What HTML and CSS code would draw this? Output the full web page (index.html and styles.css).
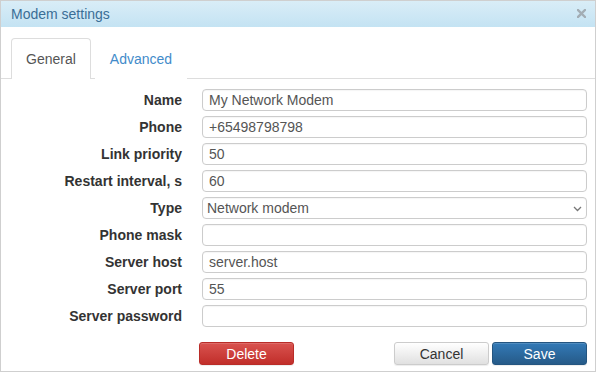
FILE: index.html
```html
<!DOCTYPE html>
<html>
<head>
<meta charset="utf-8">
<link rel="stylesheet" href="styles.css">
</head>
<body>
<div class="dialog">
  <div class="header">
    <span class="title">Modem settings</span>
    <svg class="close" width="9" height="9" viewBox="0 0 9 9"><path d="M1 1 L8 8 M8 1 L1 8" stroke="#a3adb4" stroke-width="2.4" stroke-linecap="square"/></svg>
  </div>
  <div class="tabs">
    <div class="tab active">General</div>
    <div class="tab">Advanced</div>
  </div>
  <div class="form">
    <label class="lbl">Name</label>
    <input class="inp" type="text" value="My Network Modem">
    <label class="lbl">Phone</label>
    <input class="inp" type="text" value="+65498798798">
    <label class="lbl">Link priority</label>
    <input class="inp" type="text" value="50">
    <label class="lbl">Restart interval, s</label>
    <input class="inp" type="text" value="60">
    <label class="lbl">Type</label>
    <div class="selwrap">
      <select class="inp sel"><option>Network modem</option></select>
      <svg class="chev" width="9" height="6" viewBox="0 0 9 6"><path d="M1 1 L4.5 4.5 L8 1" fill="none" stroke="#777" stroke-width="1.3"/></svg>
    </div>
    <label class="lbl">Phone mask</label>
    <input class="inp" type="text" value="">
    <label class="lbl">Server host</label>
    <input class="inp" type="text" value="server.host">
    <label class="lbl">Server port</label>
    <input class="inp" type="text" value="55">
    <label class="lbl">Server password</label>
    <input class="inp" type="password" value="">
  </div>
  <div class="buttons">
    <button class="btn danger">Delete</button>
    <div class="right">
      <button class="btn default">Cancel</button>
      <button class="btn primary">Save</button>
    </div>
  </div>
</div>
</body>
</html>
```
FILE: styles.css
```css
html, body {
  margin: 0;
  padding: 0;
  background: #fff;
}
body {
  font-family: "Liberation Sans", Arial, sans-serif;
  font-size: 14px;
  color: #333;
}
.dialog {
  width: 596px;
  height: 372px;
  box-sizing: border-box;
  border: 1px solid #cfcfcf;
  display: flex;
  flex-direction: column;
}
.header {
  height: 26px;
  background: linear-gradient(to bottom, #d9edf7, #c4e3f3);
  display: flex;
  align-items: center;
  justify-content: space-between;
  padding: 0 9px 0 10px;
}
.title {
  color: #3a6e96;
  font-size: 14px;
}
.close {
  display: block;
  margin-top: -1px;
}
.tabs {
  margin-top: 11px;
  display: flex;
  align-items: flex-end;
  padding-left: 10px;
  border-bottom: 1px solid #ddd;
}
.tab {
  height: 41px;
  box-sizing: border-box;
  padding: 0 14px 1px;
  border: 1px solid transparent;
  border-bottom: none;
  border-radius: 4px 4px 0 0;
  display: flex;
  align-items: center;
  color: #428bca;
  margin-bottom: -1px;
  margin-right: 4px;
  background: #fff;
}
.tab.active {
  border-color: #ddd;
  color: #555;
}
.form {
  display: grid;
  grid-template-columns: 181px 1fr;
  column-gap: 20px;
  row-gap: 5px;
  padding: 10px 8px 0 0;
}
.lbl {
  font-weight: bold;
  text-align: right;
  align-self: center;
  color: #333;
  white-space: nowrap;
}
.inp {
  height: 22px;
  box-sizing: border-box;
  width: 100%;
  margin: 0;
  border: 1px solid #ccc;
  border-radius: 4px;
  padding: 0 6px;
  font-family: "Liberation Sans", Arial, sans-serif;
  font-size: 14px;
  color: #555;
  background: #fff;
  box-shadow: inset 0 1px 1px rgba(0,0,0,0.04);
  outline: none;
}
.selwrap {
  position: relative;
}
.sel {
  -webkit-appearance: none;
  appearance: none;
  padding: 0 4px;
  color: #555;
}
.chev {
  position: absolute;
  right: 5px;
  top: 9px;
  pointer-events: none;
}
.buttons {
  display: flex;
  margin-top: 15px;
  padding: 0 8px 0 198px;
}
.right {
  margin-left: auto;
  display: flex;
  gap: 3px;
}
.btn {
  width: 95px;
  height: 23px;
  box-sizing: border-box;
  border-radius: 3px;
  font-family: "Liberation Sans", Arial, sans-serif;
  font-size: 14px;
  padding: 0;
  margin: 0;
  line-height: 20px;
  box-shadow: inset 0 1px 0 rgba(255,255,255,0.15), 0 1px 1px rgba(0,0,0,0.075);
}
.danger {
  color: #fff;
  background: linear-gradient(to bottom, #d9534f, #c12e2a);
  border: 1px solid #b92c28;
}
.default {
  color: #333;
  background: linear-gradient(to bottom, #fff, #e0e0e0);
  border: 1px solid #ccc;
}
.primary {
  color: #fff;
  background: linear-gradient(to bottom, #337ab7, #265a88);
  border: 1px solid #245580;
}
```
